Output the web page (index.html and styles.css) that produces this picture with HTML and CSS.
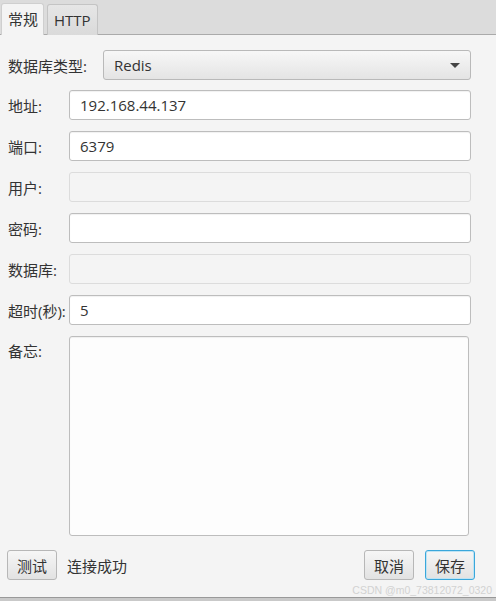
FILE: index.html
```html
<!DOCTYPE html>
<html lang="zh-CN">

<head>
    <meta charset="UTF-8">
    <meta name="viewport" content="width=device-width, initial-scale=1.0">
    <title>连接设置</title>
    <link rel="stylesheet" href="styles.css">
</head>

<body>
    <div class="window">
        <div class="tabs">
            <div class="tab active">常规</div>
            <div class="tab">HTTP</div>
        </div>

        <div class="content">
            <div class="type-row">
                <label>数据库类型:</label>
                <div class="combo">
                    <span>Redis</span>
                    <span class="arrow"></span>
                </div>
            </div>

            <div class="form">
                <label>地址:</label>
                <input type="text" value="192.168.44.137">
                <label>端口:</label>
                <input type="text" value="6379">
                <label>用户:</label>
                <input type="text" disabled>
                <label>密码:</label>
                <input type="password">
                <label>数据库:</label>
                <input type="text" disabled>
                <label>超时(秒):</label>
                <input type="text" value="5">
                <label class="top">备忘:</label>
                <textarea></textarea>
            </div>

            <div class="actions">
                <button class="btn">测试</button>
                <span class="status">连接成功</span>
                <span class="spacer"></span>
                <button class="btn">取消</button>
                <button class="btn focused">保存</button>
            </div>
        </div>

        <div class="bottom-bar"></div>
        <div class="watermark">CSDN @m0_73812072_0320</div>
    </div>
</body>

</html>
```

FILE: styles.css
```css
body {
    margin: 0;
    font-family: "Open Sans", "Noto Sans CJK SC", sans-serif;
    font-size: 15px;
    color: #333;
    background-color: #f4f4f4;
}

.window {
    position: relative;
    width: 496px;
    height: 601px;
    display: flex;
    flex-direction: column;
    overflow: hidden;
}

.tabs {
    display: flex;
    align-items: flex-end;
    gap: 3px;
    height: 35px;
    padding-left: 1px;
    background-color: #dcdcdc;
    border-bottom: 1px solid #aaa;
    box-sizing: border-box;
}

.tab {
    height: 31px;
    line-height: 30px;
    padding: 0 6px;
    border: 1px solid #c4c4c4;
    border-bottom: none;
    border-radius: 3px 3px 0 0;
    background: linear-gradient(#e6e6e6, #dadada);
    box-sizing: border-box;
    margin-bottom: -1px;
}

.tab.active {
    padding: 0 5px 0 6px;
    height: 32px;
    background-color: #f4f4f4;
    background-image: none;
    border-color: #cfcfcf;
}

.content {
    flex: 1;
    padding: 15px 25px 0 8px;
}

.type-row {
    display: flex;
    align-items: center;
    gap: 16px;
    margin-bottom: 10px;
}

label {
    white-space: nowrap;
}

.combo {
    flex: 1;
    height: 30px;
    display: flex;
    align-items: center;
    justify-content: space-between;
    padding: 0 10px;
    border: 1px solid #b9b9b9;
    border-radius: 3px;
    background: linear-gradient(#f7f7f7, #e4e4e4);
    box-sizing: border-box;
}

.arrow {
    width: 0;
    height: 0;
    border-left: 5px solid transparent;
    border-right: 5px solid transparent;
    border-top: 5px solid #444;
}

.form {
    display: grid;
    grid-template-columns: 58px 1fr;
    column-gap: 3px;
    row-gap: 11px;
    align-items: center;
}

.form label.top {
    align-self: start;
    padding-top: 4px;
}

input,
textarea {
    font: inherit;
    color: #333;
    height: 30px;
    padding: 0 10px;
    border: 1px solid #bdbdbd;
    border-radius: 3px;
    background-color: white;
    box-sizing: border-box;
    box-shadow: inset 0 1px 1px rgba(0, 0, 0, 0.06);
    width: 100%;
}

input:disabled {
    background-color: #f4f4f4;
    border-color: #dcdcdc;
    box-shadow: none;
}

textarea {
    height: 200px;
    width: 400px;
    resize: none;
    background-color: #fdfdfd;
}

.actions {
    display: flex;
    align-items: center;
    margin-top: 14px;
}

.btn {
    font: inherit;
    color: #333;
    height: 30px;
    padding: 0 9px;
    border: 1px solid #b7b7b7;
    border-radius: 3px;
    background: linear-gradient(#f6f6f6, #e2e2e2);
    box-sizing: border-box;
    margin-left: -1px;
}

.status {
    margin-left: 10px;
}

.spacer {
    flex: 1;
}

.btn + .btn {
    margin-left: 11px;
}

.btn.focused {
    border-color: #3aa7db;
    box-shadow: inset 0 0 0 1px #bfe3f3;
    margin-right: -4px;
}

.bottom-bar {
    height: 3px;
    background-color: #c9c9c9;
    border-top: 1px solid #999;
}

.watermark {
    position: absolute;
    right: 4px;
    bottom: 5px;
    font-family: "Liberation Sans", sans-serif;
    font-size: 10.5px;
    color: #d2d2d2;
}
```
